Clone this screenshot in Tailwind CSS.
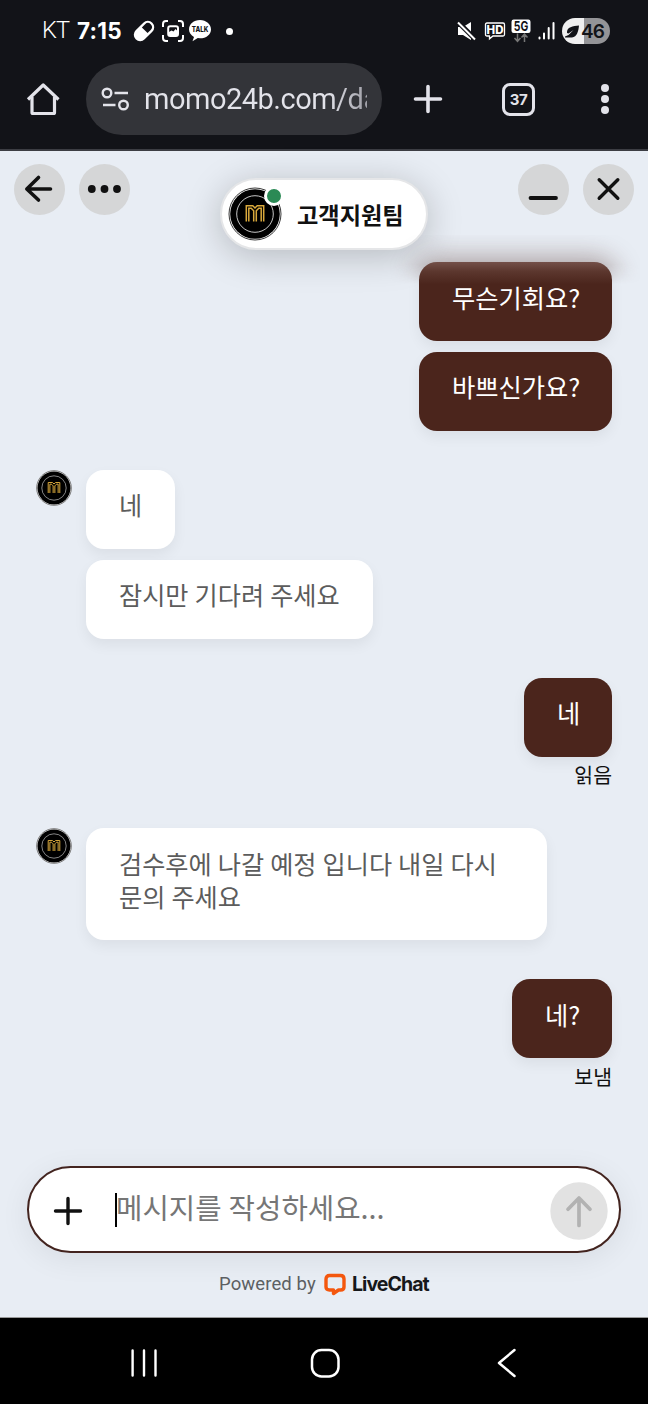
<!DOCTYPE html>
<html lang="ko">
<head>
<meta charset="utf-8">
<title>고객지원팀</title>
<script src="https://cdn.jsdelivr.net/npm/@tailwindcss/browser@4"></script>
</head>
<body class="w-[648px] h-[1404px] overflow-hidden bg-black font-['Noto_Sans_CJK_KR',sans-serif]">
<svg class="hidden">
  <symbol id="brand" viewBox="0 0 54 54">
    <circle cx="27" cy="27" r="26.5" fill="#fff"/>
    <circle cx="27" cy="27" r="26" fill="none" stroke="#222" stroke-width=".9"/>
    <circle cx="27" cy="27" r="24.8" fill="#000"/>
    <circle cx="27" cy="27" r="18.3" fill="none" stroke="#ddd" stroke-width=".9"/>
    <g fill="none" stroke="#d9a93c" stroke-width="1.5"><path d="M18.300 34.500V18.800h6.500l2.200 2.200 2.200-2.200h6.500v15.700"/><path d="M20.800 34.500V21.300h2.400l2.500 2.500v10.700M33.200 34.500V21.300h-2.400l-2.500 2.500v10.700"/></g>
  </symbol>
</svg>
<div class="flex h-full flex-col">
  <!-- Status bar -->
  <div class="flex h-[62px] shrink-0 items-center bg-[#121318] pl-[42px] pr-[38px] text-white">
    <span class="w-[35px] whitespace-nowrap font-[Roboto] text-[23.5px] leading-none font-light tracking-[-0.8px]">KT</span>
    <span class="w-[55px] whitespace-nowrap font-[Inter] text-[22.5px] leading-none font-bold tracking-[0.2px]">7:15</span>
    <svg class="size-[24px] shrink-0" viewBox="0 0 24 24"><g transform="rotate(-45 12 12)"><rect x=".2" y="5.600" width="23.600" height="12.800" rx="6.400" fill="#fff"/><path d="M13 8h4.5a4 4 0 0 1 0 8H13z" fill="#121318"/></g></svg>
    <svg class="ml-[5px] size-[24px] shrink-0" viewBox="0 0 24 24" fill="none" stroke="#fff" stroke-width="2"><path d="M2 8V5a3 3 0 0 1 3-3h2M17 2h2a3 3 0 0 1 3 3v3M22 16v3a3 3 0 0 1-3 3h-2M7 22H5a3 3 0 0 1-3-3v-3"/><rect x="7.2" y="7.2" width="9.8" height="9.8" rx="2"/><path d="M8 16v-3l2.5-1.500 2 1 2-2.500 2 2V16z" fill="#fff" stroke="none"/></svg>
    <svg class="ml-[3px] h-[24px] w-[24px] shrink-0" viewBox="0 0 24 24"><path d="M12 1C5.800 1 1 5.100 1 10.400c0 3.200 2 5.900 5 7.500l-1.500 4.400 5.300-3.200 2.200.2c6.200 0 11-3.900 11-8.900S18.200 1 12 1z" fill="#fff"/><text x="12" y="13.100" text-anchor="middle" font-family="Inter" font-weight="800" font-size="7" textLength="16.500" lengthAdjust="spacingAndGlyphs" fill="#121318">TALK</text></svg>
    <span class="ml-[14px] size-[7px] rounded-full bg-white"></span>
    <svg class="ml-auto h-[20px] w-[19px] shrink-0" viewBox="0 0 19 20" fill="#fff"><path d="M1 6h5l8-5v18l-8-5H1z"/><path d="M0 0l19 19" stroke="#121318" stroke-width="5"/><path d="M1 1.500l17 17" stroke="#fff" stroke-width="2"/></svg>
    <svg class="ml-[8px] h-[20px] w-[22px] shrink-0" viewBox="0 0 22 20"><path d="M3 2h16q1.500 0 1.500 1.500v10Q20.500 15 19 15H9l-3.500 2.800V15H3q-1.500 0-1.500-1.500v-10Q1.500 2 3 2z" fill="none" stroke="#fff" stroke-width="1.300"/><text x="11" y="12.800" text-anchor="middle" font-family="Inter" font-size="11.500" font-weight="800" fill="#fff">HD</text></svg>
    <svg class="ml-[5px] h-[24px] w-[20px] shrink-0" viewBox="0 0 20 24"><rect x=".5" y=".5" width="19" height="13.500" rx="2.200" fill="#fff"/><text x="10" y="12" text-anchor="middle" font-family="Inter" font-weight="700" font-size="13.500" textLength="14.500" lengthAdjust="spacingAndGlyphs" fill="#121318">5G</text><path d="M6.500 14.500v7.500M3.500 19l3 3.300 3-3.300M13.500 23v-7.500M10.500 18.500l3-3.300 3 3.300" fill="none" stroke="#777" stroke-width="1.500"/></svg>
    <svg class="ml-[7px] h-[18px] w-[17px] shrink-0" viewBox="0 0 17 18" stroke="#fff" stroke-width="2" stroke-linecap="round"><path d="M1.500 15.500v1M6 11.500v5M10.700 6v10.500M15.500 1v15.500" stroke="#fff"/></svg>
    <div class="ml-[7px] flex h-[26px] w-[48px] shrink-0 items-center rounded-full bg-[linear-gradient(90deg,#f0f0f0_46%,#949497_46%)] pl-[3px] text-[#121318]">
      <svg class="size-[15px] shrink-0" viewBox="0 0 15 15"><path d="M14 1.500C8 2 1.500 3 2 9l1.500.5 5-3.500-5 5L0 12.500v1h7C12 13 13.500 7 14 1.500z" fill="#121318"/></svg>
      <span class="ml-px font-[Inter] text-[19px] leading-none font-semibold tracking-[-0.800px]">46</span>
    </div>
  </div>
  <!-- Browser toolbar -->
  <div class="flex h-[89px] shrink-0 items-start border-b-2 border-[#3c3d43] bg-[#121318] pl-[26px] text-[#e3e3ea]">
    <svg class="mt-[20px] size-[34px] shrink-0" viewBox="0 0 34 34" fill="none" stroke="#e3e3ea" stroke-width="3.200" stroke-linejoin="round"><path d="M2 17.500L17.200 3 32.500 17.500"/><path d="M6 15v15.500q0 1 1 1h20.500q1 0 1-1V15"/></svg>
    <div class="ml-[26px] mt-px flex h-[72px] w-[296px] shrink-0 items-center rounded-full bg-[#333439] pl-[15px]">
      <svg class="h-[24px] w-[29px] shrink-0" viewBox="0 0 29 24" fill="none" stroke="#e3e3ea" stroke-width="2.400"><circle cx="6" cy="6" r="4.300"/><path d="M13.500 6H27M2 18h12.500"/><circle cx="22.500" cy="18" r="4.300"/></svg>
      <div class="ml-[14px] w-[223px] overflow-hidden whitespace-nowrap bg-[linear-gradient(90deg,#e3e3ea_82%,#a0a0a8)] bg-clip-text font-[Roboto] text-[29px] leading-[40px] tracking-[-0.500px] text-transparent">momo24b.com/da</div>
    </div>
    <svg class="ml-[31px] mt-[22px] size-[30px] shrink-0" viewBox="0 0 30 30" stroke="#e3e3ea" stroke-width="3.600" stroke-linecap="round"><path d="M15 2.500v25M2.500 15h25"/></svg>
    <div class="ml-[59px] mt-[21px] flex size-[33px] items-center justify-center rounded-[8px] border-[3px] border-[#e3e3ea] font-[Inter] text-[15px] leading-none font-bold tracking-[-0.5px]">37</div>
    <div class="ml-[66px] mt-[22px] flex w-[8px] flex-col gap-[3px]"><i class="size-[8px] rounded-full bg-[#e3e3ea]"></i><i class="size-[8px] rounded-full bg-[#e3e3ea]"></i><i class="size-[8px] rounded-full bg-[#e3e3ea]"></i></div>
  </div>
  <!-- Chat widget -->
  <div class="relative flex h-[1166px] shrink-0 flex-col bg-[#e8edf4] pt-[13px]">
    <div class="flex items-start pl-[14px] pr-[14px]">
      <svg class="size-[51px]" viewBox="0 0 51 51" fill="none" stroke="#111" stroke-width="3.600" stroke-linecap="round" stroke-linejoin="round"><circle cx="25.500" cy="25.500" r="25.500" fill="#d5d6d7" stroke="none"/><path d="M36.500 25H13M24.500 13.500L12.800 25l11.700 11"/></svg>
      <svg class="ml-[14px] size-[51px]" viewBox="0 0 51 51"><circle cx="25.500" cy="25.500" r="25.500" fill="#d5d6d7"/><g fill="#111"><circle cx="12.800" cy="25" r="3.900"/><circle cx="25.500" cy="25" r="3.900"/><circle cx="38" cy="25" r="3.900"/></g></svg>
      <div class="relative ml-[90px] mt-[14px] flex h-[72px] w-[208px] shrink-0 items-center rounded-full border-2 border-[#e5e6e8] bg-white pl-[6px] shadow-[0_6px_36px_rgba(0,0,0,0.22)]">
        <svg class="size-[54px] shrink-0"><use href="#brand"/></svg>
        <span class="absolute left-[42px] top-[6px] size-[20px] rounded-full border-[3px] border-white bg-[#2b8a55]"></span>
        <span class="ml-[15px] whitespace-nowrap text-[23.200px] leading-[30px] font-bold text-[#111]">고객지원팀</span>
      </div>
      <svg class="ml-auto size-[51px]" viewBox="0 0 51 51" stroke="#111" stroke-width="3.800" stroke-linecap="round"><circle cx="25.500" cy="25.500" r="25.500" fill="#d5d6d7" stroke="none"/><path d="M12.500 34h25.500"/></svg>
      <svg class="ml-[14px] size-[51px]" viewBox="0 0 51 51" stroke="#111" stroke-width="3.400" stroke-linecap="round"><circle cx="25.500" cy="25.500" r="25.500" fill="#d5d6d7" stroke="none"/><path d="M16.200 15.700l18.600 18.600M34.800 15.700L16.200 34.300"/></svg>
    </div>
    <!-- Blurred band under the header -->
    <div class="pointer-events-none absolute left-[390px] top-[84px] h-[49px] w-[250px] overflow-hidden mask-b-from-60%"><div class="ml-[29px] mt-[27px] h-[79px] w-[193px] rounded-[18px] bg-[#4b251c]/30 shadow-[0_0_24px_6px_rgba(75,37,28,0.35)]"></div></div>
    <div class="mt-[12px] flex flex-col items-end gap-[11px] pr-[36px] text-[25.300px] leading-[32px] text-white">
      <div class="relative h-[79px] w-[193px] rounded-[18px] bg-[#4b251c] bg-[linear-gradient(180deg,#745049_0%,#5c372e_12%,#4b251c_28%)] pl-[33px] pt-[19px] shadow-[0_6px_14px_rgba(0,0,0,0.06)]">무슨기회요?</div>
      <div class="h-[79px] w-[193px] rounded-[18px] bg-[#4b251c] pl-[33px] pt-[18px] shadow-[0_6px_14px_rgba(0,0,0,0.06)]">바쁘신가요?</div>
    </div>
    <div class="mt-[39px] flex items-start pl-[36px] text-[25.200px] leading-[32px] text-[#5c5c5c] [word-spacing:-1px]">
      <svg class="size-[36px] shrink-0"><use href="#brand"/></svg>
      <div class="ml-[14px] flex flex-col items-start gap-[11px]">
        <div class="h-[79px] w-[89px] rounded-[18px] bg-white pl-[33px] pt-[18px] shadow-[0_6px_14px_rgba(0,0,0,0.06)]">네</div>
        <div class="h-[79px] w-[287px] whitespace-nowrap rounded-[18px] bg-white pl-[33px] pt-[18px] shadow-[0_6px_14px_rgba(0,0,0,0.06)]">잠시만 기다려 주세요</div>
      </div>
    </div>
    <div class="mt-[39px] flex flex-col items-end pr-[36px]">
      <div class="h-[79px] w-[88px] rounded-[18px] bg-[#4b251c] pl-[33px] pt-[18px] text-[25.300px] leading-[32px] text-white shadow-[0_6px_14px_rgba(0,0,0,0.06)]">네</div>
      <span class="mt-[3px] text-[20.500px] leading-[28px] text-[#111]">읽음</span>
    </div>
    <div class="mt-[40px] flex items-start pl-[36px] text-[25.200px] leading-[33px] text-[#5c5c5c] [word-spacing:-1px]">
      <svg class="size-[36px] shrink-0"><use href="#brand"/></svg>
      <div class="ml-[14px] h-[112px] w-[461px] whitespace-nowrap rounded-[18px] bg-white pl-[33px] pt-[19px] shadow-[0_6px_14px_rgba(0,0,0,0.06)]">검수후에 나갈 예정 입니다 내일 다시<br>문의 주세요</div>
    </div>
    <div class="mt-[39px] flex flex-col items-end pr-[36px]">
      <div class="h-[79px] w-[100px] rounded-[18px] bg-[#4b251c] pl-[33px] pt-[19px] text-[25.300px] leading-[32px] text-white shadow-[0_6px_14px_rgba(0,0,0,0.06)]">네?</div>
      <span class="mt-[4px] text-[20.500px] leading-[28px] text-[#111]">보냄</span>
    </div>
    <div class="mx-[27px] mt-auto flex h-[87px] shrink-0 items-center rounded-full border-2 border-[#43241f] bg-white pl-[24px] pr-[11px] shadow-[0_6px_30px_rgba(0,0,0,0.07)]">
      <svg class="mt-[3px] size-[30px] shrink-0" viewBox="0 0 30 30" stroke="#111" stroke-width="3.400" stroke-linecap="round"><path d="M15 2.500v25M2.500 15h25"/></svg>
      <span class="ml-[32px] h-[34px] w-[2px] bg-black"></span>
      <span class="-ml-px mb-[5px] whitespace-nowrap text-[28.700px] leading-[40px] text-[#767676] [word-spacing:-1px]">메시지를 작성하세요...</span>
      <svg class="ml-auto mt-[3px] size-[58px] shrink-0" viewBox="0 0 58 58" fill="none" stroke="#b2b2b2" stroke-width="3.700" stroke-linecap="round" stroke-linejoin="round"><circle cx="29" cy="29" r="28.700" fill="#e2e2e2" stroke="none"/><path d="M29 43.500V16M18 27.200L29 16l11 11.200"/></svg>
    </div>
    <div class="mb-[17px] mt-[16px] flex h-[31px] shrink-0 items-center pl-[219px]">
      <span class="w-[105px] whitespace-nowrap font-[Roboto] text-[18.500px] tracking-[0.100px] text-[#5c5f63]">Powered by</span>
      <svg class="h-[23px] w-[22px] shrink-0" viewBox="0 0 22 23"><path d="M5.500 2.500h11q3.500 0 3.500 3.500v8q0 3-3.500 3h-2l-5 3.500V17h-4Q2 17 2 14V6q0-3.500 3.500-3.500z" fill="none" stroke="#f4570e" stroke-width="3.400" stroke-linejoin="round"/></svg>
      <span class="ml-[6px] whitespace-nowrap font-[Inter] text-[19.500px] font-bold tracking-[-0.950px] text-[#16181b]">LiveChat</span>
    </div>
  </div>
  <!-- System navigation -->
  <div class="flex h-[87px] shrink-0 items-center border-t border-[#999] bg-black pl-[130px] pt-[3px]">
    <svg class="h-[30px] w-[28px]" viewBox="0 0 28 30" stroke="#fff" stroke-width="2.400" stroke-linecap="round"><path d="M2.600 2.500v25M14 2.500v25M25.500 2.500v25"/></svg>
    <svg class="ml-[152px] size-[30px]" viewBox="0 0 30 30" fill="none" stroke="#fff" stroke-width="2.500"><rect x="2" y="2" width="26.500" height="26.500" rx="9.500"/></svg>
    <svg class="ml-[156px] h-[30px] w-[22px]" viewBox="0 0 22 30" fill="none" stroke="#fff" stroke-width="2.500" stroke-linecap="round" stroke-linejoin="round"><path d="M18.500 2L3 15l15.500 13"/></svg>
  </div>
</div>
</body>
</html>
